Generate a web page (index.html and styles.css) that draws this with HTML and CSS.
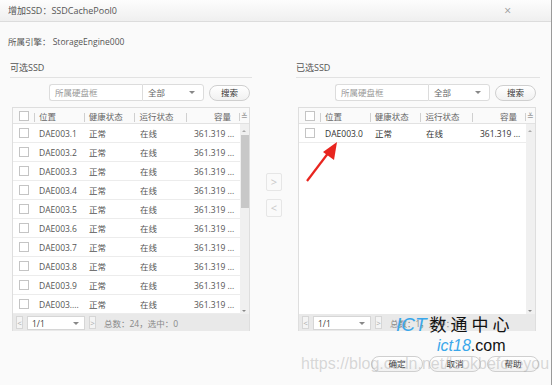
FILE: index.html
```html
<!DOCTYPE html>
<html>
<head>
    <meta charset="utf-8">
    <title>增加SSD</title>
    <link rel="stylesheet" href="styles.css">
</head>
<body>
<div class="dialog">
    <div class="titlebar">
        <span class="title">增加SSD：SSDCachePool0</span>
        <span class="close">×</span>
    </div>

    <div class="engine">所属引擎： StorageEngine000</div>

    <div class="panels">
        <!-- 可选 -->
        <div class="panel">
            <div class="panel-title">可选SSD</div>
            <div class="search">
                <div class="search-input">所属硬盘框</div>
                <div class="combo">全部<span class="caret"></span></div>
                <div class="btn">搜索</div>
            </div>
            <div class="grid">
                <div class="grid-head">
                    <div class="cell cell-check"><span class="checkbox"></span></div>
                    <div class="cell sep">位置</div>
                    <div class="cell sep">健康状态</div>
                    <div class="cell sep">运行状态</div>
                    <div class="cell sep cell-right">容量</div>
                    <div class="cell sep cell-more">≚</div>
                </div>
                <div class="grid-main">
                    <div class="rows">
                        <div class="row"><div class="cell cell-check"><span class="checkbox"></span></div><div class="cell">DAE003.1</div><div class="cell">正常</div><div class="cell">在线</div><div class="cell cell-cap">361.319 ...</div></div>
                        <div class="row"><div class="cell cell-check"><span class="checkbox"></span></div><div class="cell">DAE003.2</div><div class="cell">正常</div><div class="cell">在线</div><div class="cell cell-cap">361.319 ...</div></div>
                        <div class="row"><div class="cell cell-check"><span class="checkbox"></span></div><div class="cell">DAE003.3</div><div class="cell">正常</div><div class="cell">在线</div><div class="cell cell-cap">361.319 ...</div></div>
                        <div class="row"><div class="cell cell-check"><span class="checkbox"></span></div><div class="cell">DAE003.4</div><div class="cell">正常</div><div class="cell">在线</div><div class="cell cell-cap">361.319 ...</div></div>
                        <div class="row"><div class="cell cell-check"><span class="checkbox"></span></div><div class="cell">DAE003.5</div><div class="cell">正常</div><div class="cell">在线</div><div class="cell cell-cap">361.319 ...</div></div>
                        <div class="row"><div class="cell cell-check"><span class="checkbox"></span></div><div class="cell">DAE003.6</div><div class="cell">正常</div><div class="cell">在线</div><div class="cell cell-cap">361.319 ...</div></div>
                        <div class="row"><div class="cell cell-check"><span class="checkbox"></span></div><div class="cell">DAE003.7</div><div class="cell">正常</div><div class="cell">在线</div><div class="cell cell-cap">361.319 ...</div></div>
                        <div class="row"><div class="cell cell-check"><span class="checkbox"></span></div><div class="cell">DAE003.8</div><div class="cell">正常</div><div class="cell">在线</div><div class="cell cell-cap">361.319 ...</div></div>
                        <div class="row"><div class="cell cell-check"><span class="checkbox"></span></div><div class="cell">DAE003.9</div><div class="cell">正常</div><div class="cell">在线</div><div class="cell cell-cap">361.319 ...</div></div>
                        <div class="row"><div class="cell cell-check"><span class="checkbox"></span></div><div class="cell">DAE003....</div><div class="cell">正常</div><div class="cell">在线</div><div class="cell cell-cap">361.319 ...</div></div>
                    </div>
                    <div class="scroll">
                        <span class="arrow-up"></span>
                        <span class="thumb"></span>
                        <span class="arrow-down"></span>
                    </div>
                </div>
                <div class="grid-foot">
                    <span class="pager-btn">&lt;</span>
                    <span class="page-select">1/1<span class="caret"></span></span>
                    <span class="pager-btn">&gt;</span>
                    <span class="total">总数：24，选中：0</span>
                </div>
            </div>
        </div>

        <div class="mover">
            <span class="move-btn">&gt;</span>
            <span class="move-btn">&lt;</span>
        </div>

        <!-- 已选 -->
        <div class="panel">
            <div class="panel-title">已选SSD</div>
            <div class="search">
                <div class="search-input">所属硬盘框</div>
                <div class="combo">全部<span class="caret"></span></div>
                <div class="btn">搜索</div>
            </div>
            <div class="grid">
                <div class="grid-head">
                    <div class="cell cell-check"><span class="checkbox"></span></div>
                    <div class="cell sep">位置</div>
                    <div class="cell sep">健康状态</div>
                    <div class="cell sep">运行状态</div>
                    <div class="cell sep cell-right">容量</div>
                    <div class="cell sep cell-more">≚</div>
                </div>
                <div class="grid-main">
                    <div class="rows">
                        <div class="row"><div class="cell cell-check"><span class="checkbox"></span></div><div class="cell dark">DAE003.0</div><div class="cell dark">正常</div><div class="cell dark">在线</div><div class="cell cell-cap dark">361.319 ...</div></div>
                    </div>
                    <div class="scroll">
                        <span class="arrow-up"></span>
                        <span class="arrow-down"></span>
                    </div>
                </div>
                <div class="grid-foot">
                    <span class="pager-btn">&lt;</span>
                    <span class="page-select">1/1<span class="caret"></span></span>
                    <span class="pager-btn">&gt;</span>
                    <span class="total">总数：1，选中：0</span>
                </div>
            </div>
        </div>
    </div>

    <div class="actions">
        <span class="btn action">确定</span>
        <span class="btn action">取消</span>
        <span class="btn action">帮助</span>
    </div>

    <svg class="pointer" width="40" height="44" viewBox="0 0 40 44">
        <line x1="3" y1="41" x2="25" y2="12" stroke="#e8251f" stroke-width="2.2"/>
        <polygon points="33,2 30,20 19,12" fill="#e8251f"/>
    </svg>

    <div class="logo">
        <div class="logo-top"><span class="blue">ICT</span><span class="cn">数通中心</span></div>
        <div class="logo-bottom"><span class="blue">ict18</span>.com</div>
    </div>
    <div class="watermark">https://blog.csdn.net/lookbeforeyou</div>
</div>
</body>
</html>
```

FILE: styles.css
```css
* {
    margin: 0;
    padding: 0;
    box-sizing: border-box;
}
body {
    width: 554px;
    height: 385px;
    overflow: hidden;
    background: #fff;
    font-family: "Open Sans", "Noto Sans CJK SC", sans-serif;
    font-size: 8.5px;
    color: #444;
}
.dialog {
    position: relative;
    width: 552px;
    height: 385px;
    background: #fafafa;
    border-right: 1px solid #9a9a9a;
}
.titlebar {
    height: 22px;
    display: flex;
    align-items: center;
    justify-content: space-between;
    padding: 0 40px 0 8px;
    background: linear-gradient(#fdfdfd, #efefef);
    border-bottom: 1px solid #dcdcdc;
}
.title {
    font-size: 9px;
    color: #555;
}
.close {
    font-size: 12px;
    color: #9a9a9a;
}
.engine {
    padding: 13px 8px 0;
    line-height: 14px;
    color: #555;
}
.panels {
    display: flex;
    margin-top: 12px;
    padding-left: 10px;
}
.panel {
    width: 242px;
}
.panel:last-child {
    width: 244px;
}
.panel-title {
    line-height: 14px;
    padding-bottom: 2px;
    font-size: 9px;
    color: #555;
    border-bottom: 1px solid #e2e2e2;
}
.search {
    display: flex;
    justify-content: flex-end;
    align-items: center;
    margin-top: 6px;
    padding-right: 2px;
    height: 17px;
}
.panel:last-child .search {
    padding-right: 4px;
}
.search-input {
    width: 93px;
    height: 17px;
    line-height: 15px;
    padding-left: 5px;
    background: #fff;
    border: 1px solid #dcdcdc;
    border-right: none;
    border-radius: 3px 0 0 3px;
    color: #999;
}
.combo {
    position: relative;
    width: 62px;
    height: 17px;
    line-height: 15px;
    padding-left: 5px;
    background: #fff;
    border: 1px solid #dcdcdc;
    border-radius: 0 3px 3px 0;
    color: #666;
}
.caret {
    position: absolute;
    right: 8px;
    top: 6px;
    border: 3px solid transparent;
    border-top: 3px solid #888;
}
.btn {
    display: inline-block;
    margin-left: 5px;
    width: 41px;
    height: 16px;
    line-height: 14px;
    text-align: center;
    background: linear-gradient(#fff, #f1f1f1);
    border: 1px solid #cfcfcf;
    border-radius: 8px;
    color: #333;
}
.grid {
    margin: 6px 2px 0;
    width: 238px;
    background: #fff;
    border: 1px solid #dedede;
    border-bottom: none;
}
.grid-head {
    display: flex;
    height: 16px;
    align-items: center;
    background: #fafafa;
    border-bottom: 1px solid #e2e2e2;
    color: #666;
}
.cell {
    position: relative;
    width: 51px;
    padding-left: 5px;
    white-space: nowrap;
    overflow: hidden;
}
.cell:nth-child(2) {
    width: 50px;
}
.cell:nth-child(4) {
    width: 52px;
}
.cell:nth-child(5) {
    width: 53px;
}
.cell-check {
    width: 21px;
    padding-left: 6px;
    display: flex;
    align-items: center;
}
.cell-right {
    text-align: right;
    padding-right: 8px;
}
.cell-cap {
    padding-left: 7px;
}
.cell-more {
    width: 10px;
    padding-left: 2px;
    color: #999;
    font-size: 8px;
}
.sep::before {
    content: "";
    position: absolute;
    left: 0;
    top: 3px;
    height: 9px;
    border-left: 1px solid #d0d0d0;
}
.checkbox {
    display: block;
    width: 10px;
    height: 10px;
    background: #fff;
    border: 1px solid #c4c4c4;
}
.grid-main {
    display: flex;
    height: 190px;
}
.rows {
    width: 227px;
}
.row {
    display: flex;
    align-items: center;
    height: 19px;
    border-bottom: 1px solid #ececec;
    color: #555;
}
.row .dark {
    color: #333;
}
.scroll {
    position: relative;
    width: 9px;
    background: #f0f0f0;
}
.arrow-up,
.arrow-down {
    position: absolute;
    left: 2px;
    border: 2px solid transparent;
}
.arrow-up {
    top: 4px;
    border-bottom: 2px solid #aaa;
}
.arrow-down {
    bottom: 0;
    border-top: 2px solid #888;
}
.thumb {
    position: absolute;
    left: 1px;
    top: 11px;
    width: 8px;
    height: 73px;
    background: #c8c8c8;
}
.grid-foot {
    display: flex;
    align-items: center;
    height: 17px;
    padding-left: 3px;
    background: #e9e9e9;
    color: #888;
}
.pager-btn {
    width: 7px;
    height: 13px;
    line-height: 11px;
    font-size: 8px;
    text-align: center;
    background: #f4f4f4;
    border: 1px solid #d6d6d6;
    color: #aaa;
}
.page-select {
    position: relative;
    width: 58px;
    height: 14px;
    line-height: 13px;
    margin: 0 4px;
    padding-left: 4px;
    background: #fff;
    border: 1px solid #d6d6d6;
    color: #444;
}
.page-select .caret {
    top: 5px;
    right: 5px;
}
.total {
    margin-left: 8px;
}
.mover {
    width: 44px;
    display: flex;
    flex-direction: column;
    align-items: center;
    padding-top: 112px;
    gap: 8px;
}
.move-btn {
    width: 16px;
    height: 18px;
    line-height: 16px;
    text-align: center;
    border: 1px solid #e6e6e6;
    border-radius: 2px;
    color: #c8c8c8;
    font-size: 11px;
}
.actions {
    display: flex;
    justify-content: flex-end;
    gap: 6px;
    margin-top: 25px;
    padding-right: 12px;
}
.btn.action {
    margin-left: 0;
    width: 52px;
}
.pointer {
    position: absolute;
    left: 304px;
    top: 140px;
}
.logo {
    position: absolute;
    left: 396px;
    top: 314px;
    font-family: "Liberation Sans", "Noto Sans CJK SC", sans-serif;
    color: #111;
}
.logo-top {
    font-size: 19px;
    line-height: 22px;
    white-space: nowrap;
}
.logo-top .cn {
    margin-left: 3px;
    font-size: 17px;
    letter-spacing: 4px;
}
.logo-bottom {
    margin-left: 41px;
    font-size: 16px;
    line-height: 18px;
}
.blue {
    color: #3aa7ea;
    font-style: italic;
}
.watermark {
    position: absolute;
    left: 301px;
    top: 355px;
    font-family: "Liberation Sans", sans-serif;
    font-size: 16px;
    color: rgba(170, 170, 170, 0.45);
    white-space: nowrap;
}
```
